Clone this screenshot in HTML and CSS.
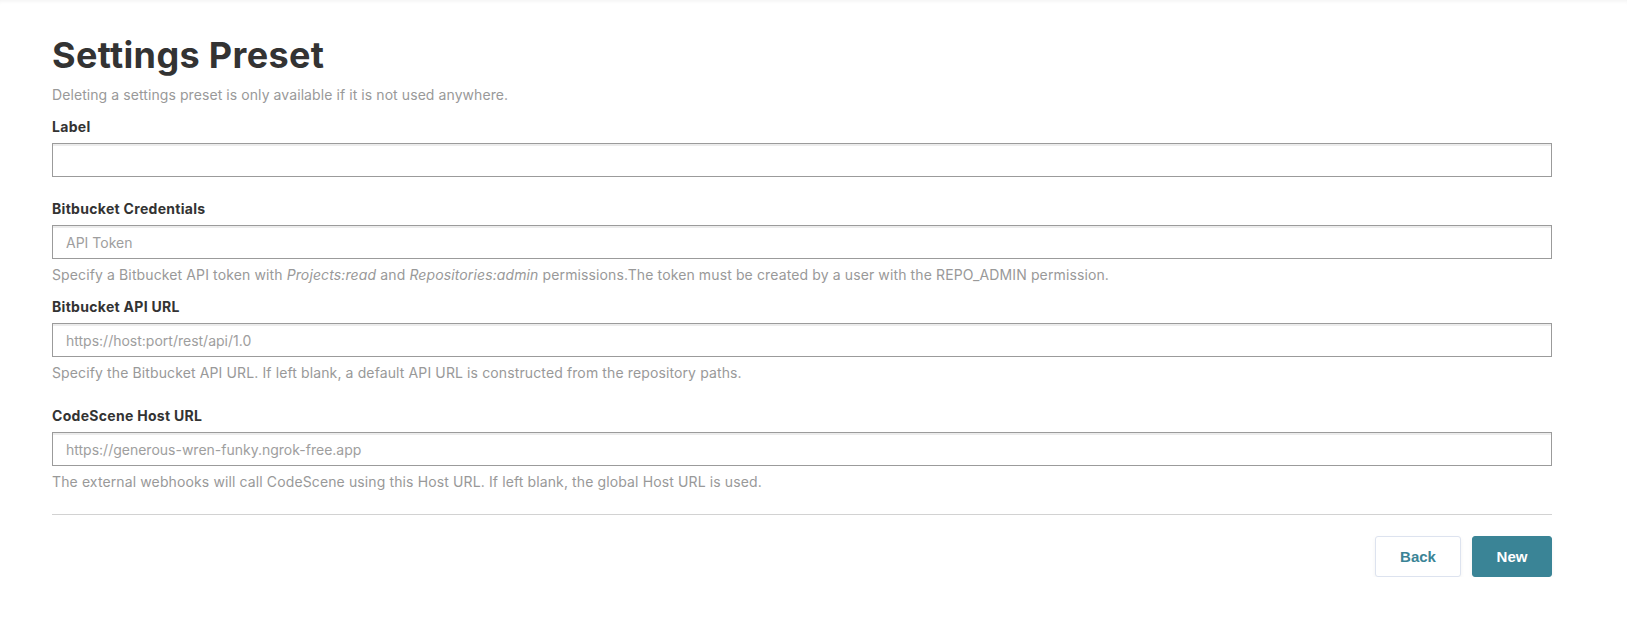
FILE: index.html
```html
<!DOCTYPE html>
<html lang="en">
<head>
  <meta charset="UTF-8" />
  <meta name="viewport" content="width=device-width, initial-scale=1" />
  <title>Settings Preset</title>
  <link rel="stylesheet" href="styles.css">
</head>
<body>
  <div class="page">
    <h1>Settings Preset</h1>
    <p class="intro">Deleting a settings preset is only available if it is not used anywhere.</p>

    <form class="preset-form" onsubmit="return false">
      <div class="field">
        <label for="label">Label</label>
        <input type="text" id="label" />
      </div>

      <div class="field field-help">
        <label for="token">Bitbucket Credentials</label>
        <input type="text" id="token" placeholder="API Token" />
        <p class="help">Specify a Bitbucket API token with <em>Projects:read</em> and <em>Repositories:admin</em> permissions.The token must be created by a user with the REPO_ADMIN permission.</p>
      </div>

      <div class="field field-spaced">
        <label for="api-url">Bitbucket API URL</label>
        <input type="text" id="api-url" placeholder="https://host:port/rest/api/1.0" />
        <p class="help">Specify the Bitbucket API URL. If left blank, a default API URL is constructed from the repository paths.</p>
      </div>

      <div class="field field-last">
        <label for="host-url">CodeScene Host URL</label>
        <input type="text" id="host-url" placeholder="https://generous-wren-funky.ngrok-free.app" />
        <p class="help">The external webhooks will call CodeScene using this Host URL. If left blank, the global Host URL is used.</p>
      </div>

      <div class="actions">
        <button type="button" class="btn btn-back">Back</button>
        <button type="submit" class="btn btn-new">New</button>
      </div>
    </form>
  </div>
</body>
</html>
```

FILE: styles.css
```css
html {
  box-shadow: inset 0 4px 4px -3px rgba(0, 0, 0, 0.06);
}
body {
  margin: 0;
  background-color: #fff;
  color: #333;
  font-family: Inter, "Noto Sans", sans-serif;
  font-size: 14px;
  line-height: 20px;
}
.page {
  max-width: 1500px;
  margin-left: 52px;
  padding-top: 33px;
}
h1 {
  margin: 0 0 8px;
  font-size: 36px;
  line-height: 44px;
  font-weight: 700;
  letter-spacing: 0.35px;
  color: #333;
}
.intro {
  margin: 0 0 12px;
  color: #999;
  letter-spacing: 0.08px;
}
.field {
  display: flex;
  flex-direction: column;
  margin-bottom: 22px;
}
.field-help {
  margin-bottom: 12px;
}
.field-spaced {
  margin-bottom: 23px;
}
.field-last {
  margin-bottom: 0;
}
.field label {
  font-weight: 700;
  letter-spacing: 0.3px;
  color: #333;
  margin-bottom: 6px;
}
.field input {
  box-sizing: border-box;
  height: 34px;
  padding: 0 13px;
  border: 1px solid #9b9b9b;
  border-radius: 0;
  box-shadow: inset 0 2px 0 #ececec;
  font-family: inherit;
  font-size: 14px;
  color: #333;
  outline: none;
}
.field input::placeholder {
  color: #9e9e9e;
}
.help {
  margin: 6px 0 0;
  color: #999;
  letter-spacing: 0.12px;
}
.actions {
  display: flex;
  justify-content: flex-end;
  gap: 11px;
  margin-top: 22px;
  padding-top: 21px;
  border-top: 1px solid #d2d2d2;
}
.btn {
  height: 41px;
  padding: 0 19px;
  border-radius: 3px;
  font-family: "Liberation Sans", Arial, sans-serif;
  font-size: 15px;
  font-weight: 700;
  cursor: pointer;
  box-shadow: 0 2px 4px rgba(0, 0, 0, 0.05);
}
.btn-back {
  width: 86px;
  background-color: #fff;
  border: 1px solid #dde3ef;
  color: #3a8496;
}
.btn-new {
  width: 80px;
  background-color: #3a8496;
  border: 1px solid #3a8496;
  color: #fff;
}
```
